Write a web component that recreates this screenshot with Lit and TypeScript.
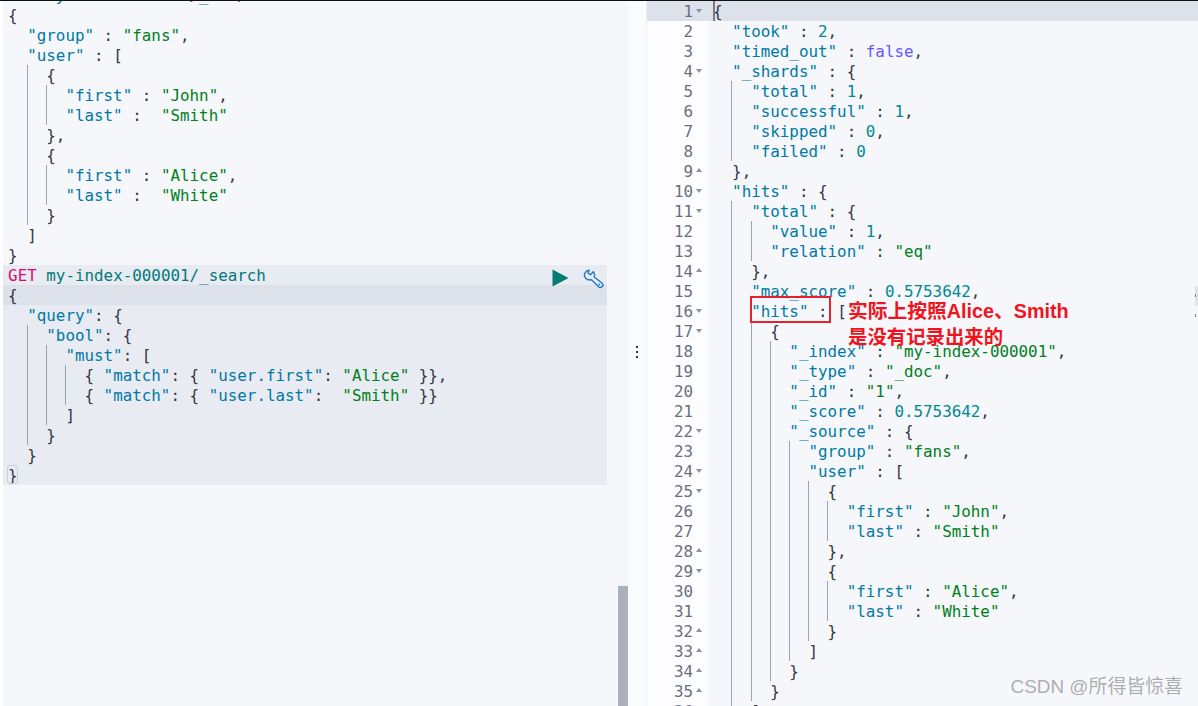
import { LitElement, html, css, nothing } from "lit";
import { customElement } from "lit/decorators.js";

const leftLines = [
  `PUT my-index-000001/_doc/1`,
  `{`,
  `  "group" : "fans",`,
  `  "user" : [`,
  `    {`,
  `      "first" : "John",`,
  `      "last" :  "Smith"`,
  `    },`,
  `    {`,
  `      "first" : "Alice",`,
  `      "last" :  "White"`,
  `    }`,
  `  ]`,
  `}`,
  `GET my-index-000001/_search`,
  `{`,
  `  "query": {`,
  `    "bool": {`,
  `      "must": [`,
  `        { "match": { "user.first": "Alice" }},`,
  `        { "match": { "user.last":  "Smith" }}`,
  `      ]`,
  `    }`,
  `  }`,
  `}`,
];

const rightLines = [
  `{`,
  `  "took" : 2,`,
  `  "timed_out" : false,`,
  `  "_shards" : {`,
  `    "total" : 1,`,
  `    "successful" : 1,`,
  `    "skipped" : 0,`,
  `    "failed" : 0`,
  `  },`,
  `  "hits" : {`,
  `    "total" : {`,
  `      "value" : 1,`,
  `      "relation" : "eq"`,
  `    },`,
  `    "max_score" : 0.5753642,`,
  `    "hits" : [`,
  `      {`,
  `        "_index" : "my-index-000001",`,
  `        "_type" : "_doc",`,
  `        "_id" : "1",`,
  `        "_score" : 0.5753642,`,
  `        "_source" : {`,
  `          "group" : "fans",`,
  `          "user" : [`,
  `            {`,
  `              "first" : "John",`,
  `              "last" : "Smith"`,
  `            },`,
  `            {`,
  `              "first" : "Alice",`,
  `              "last" : "White"`,
  `            }`,
  `          ]`,
  `        }`,
  `      }`,
  `    ]`,
];

const foldOpen = new Set([1, 4, 10, 11, 16, 17, 22, 24, 25, 29]);
const foldClose = new Set([9, 14, 28, 32, 33, 34, 35]);

function tokens(text: string) {
  const re = /("(?:[^"]*)")(\s*:)?|\b(false|true)\b|(-?\d+(?:\.\d+)?)|([^"\d]+?(?=["\d]|false|$))/g;
  const out: unknown[] = [];
  let m: RegExpExecArray | null;
  while ((m = re.exec(text))) {
    if (m[1] !== undefined) {
      if (m[2] !== undefined) {
        out.push(html`<span class="key">${m[1]}</span><span class="pun">${m[2]}</span>`);
      } else {
        out.push(html`<span class="str">${m[1]}</span>`);
      }
    } else if (m[3]) out.push(html`<span class="bool">${m[3]}</span>`);
    else if (m[4]) out.push(html`<span class="num">${m[4]}</span>`);
    else out.push(html`<span class="pun">${m[0]}</span>`);
  }
  return out;
}

function code(line: string) {
  const req = /^(GET|PUT) (.*)$/.exec(line);
  if (req) {
    return html`<span class="t"><span class="verb">${req[1]}</span> <span class="url">${req[2]}</span></span>`;
  }
  const indent = line.length - line.trimStart().length;
  const guides = [];
  for (let c = 0; c < indent; c += 2) {
    guides.push(html`<span class="ind ${c > 0 ? "guide" : ""}"></span>`);
  }
  return html`${guides}<span class="t">${tokens(line.trimStart())}</span>`;
}

@customElement("app-root")
export class AppRoot extends LitElement {
  static styles = css`
    :host {
      display: block;
      width: 1198px;
      height: 706px;
      overflow: hidden;
      background: #fff;
      position: relative;
      font-family: "DejaVu Sans Mono", "Liberation Mono", monospace;
      font-size: 15.87px;
      line-height: 22px;
      color: #343741;
    }
    .top {
      height: 1px;
      background: #111;
    }
    .main {
      display: flex;
      height: 705px;
    }
    .left {
      width: 625px;
      margin-left: 3px;
      display: flex;
      background: #f5f7fa;
      overflow: hidden;
      flex: none;
    }
    .leftcode {
      width: 604px;
      flex: none;
      margin-top: -16px;
    }
    .gap {
      width: 11px;
      flex: none;
    }
    .track {
      width: 10px;
      flex: none;
      display: flex;
      flex-direction: column;
      justify-content: flex-end;
    }
    .thumb {
      height: 120px;
      background: #abb1b8;
    }
    .resizer {
      width: 18px;
      flex: none;
      background: #fafbfd;
      display: flex;
      flex-direction: column;
      align-items: center;
      justify-content: center;
    }
    .resizer i {
      width: 2px;
      height: 2px;
      background: #343741;
      display: block;
    }
    .dots {
      display: flex;
      flex-direction: column;
      gap: 3px;
      margin-bottom: 4px;
    }
    .right {
      flex: 1;
      min-width: 0;
      background: #f5f7fa;
      border-left: 1px solid #eceff5;
      overflow: hidden;
      position: relative;
    }
    .ln {
      height: 20px;
      padding-left: 4.4px;
      white-space: pre;
      display: flex;
      align-items: flex-start;
    }
    .leftcode .ln {
      padding-left: 4.5px;
    }
    .ln.req {
      background: #e8ebf2;
    }
    .ln.active {
      background: #dce1ea;
    }
    .txt {
      display: block;
    }
    .t {
      margin-left: 0.6px;
    }
    .row {
      display: flex;
      height: 20px;
    }
    .row .ln {
      flex: 1;
      position: relative;
    }
    .gut {
      width: 61px;
      flex: none;
      background: #fdfdff;
      color: #69707d;
      display: flex;
      align-items: flex-start;
      justify-content: flex-end;
      padding-right: 15px;
      box-sizing: border-box;
      position: relative;
    }
    .row.active .gut {
      background: #dce1ea;
    }
    .fold {
      position: absolute;
      left: 49px;
      width: 0;
      height: 0;
      border-left: 3.5px solid transparent;
      border-right: 3.5px solid transparent;
    }
    .fold.open {
      top: 8px;
      border-top: 4px solid #8d929b;
    }
    .fold.close {
      top: 7px;
      border-bottom: 4px solid #8d929b;
    }
    .cursor {
      position: absolute;
      left: 5px;
      top: 0;
      width: 2px;
      height: 20px;
      background: #777d87;
    }
    .ind {
      display: inline-block;
      width: 19.108px;
      height: 20px;
      vertical-align: top;
      flex: none;
    }
    .guide {
      box-shadow: inset 1px 0 0 #9ca3b4;
    }
    .key { color: #0079a5; }
    .str { color: #007f1c; }
    .num { color: #00898f; }
    .bool { color: #6655ff; }
    .pun { color: #343741; }
    .verb { color: #dd0a73; }
    .url { color: #00797a; }
    .actions {
      margin-left: auto;
      display: flex;
      align-items: flex-start;
      gap: 14px;
      padding-right: 3px;
      margin-top: 4px;
    }
    .actions svg {
      display: block;
    }
    .match {
      position: absolute;
      left: 3.5px;
      top: 0;
      width: 11px;
      height: 19px;
      border: 1px solid #c9ced8;
      border-radius: 3px;
      box-sizing: border-box;
    }
    .leftrel {
      position: relative;
    }
    .redbox {
      position: absolute;
      left: 103px;
      top: 295px;
      width: 81px;
      height: 27px;
      border: 2px solid #e8202a;
      box-sizing: border-box;
    }
    .note {
      position: absolute;
      left: 201px;
      font-family: "Liberation Sans", "Noto Sans CJK SC", sans-serif;
      font-weight: 700;
      font-size: 19.4px;
      line-height: 26px;
      color: #f0141e;
      white-space: pre;
    }
    .note.a { top: 297px; font-size: 19.75px; }
    .note.b { top: 323px; }
    .wm {
      position: absolute;
      right: 15px;
      bottom: 6px;
      font-family: "Liberation Sans", "Noto Sans CJK SC", sans-serif;
      font-size: 18.9px;
      line-height: 26px;
      color: rgba(110, 110, 110, 0.55);
      white-space: pre;
    }
    .edge {
      position: absolute;
      right: 0;
      top: 285px;
      width: 3px;
      height: 20px;
      background: #dfe4ec;
    }
    .tick {
      position: absolute;
      left: 548px;
      width: 1px;
      height: 3px;
      background: #777d87;
    }
    .tick.a { top: 293px; }
    .tick.b { top: 313px; }
  `;

  render() {
    return html`
      <div class="top"></div>
      <div class="main">
        <div class="left">
          <div class="leftcode">
            ${leftLines.map((l, i) => {
              const inReq = i >= 14;
              const isGet = i === 14;
              const isActive = i === 15;
              return html`<div class="ln ${inReq ? "req" : ""} ${isActive ? "active" : ""} ${i === 24 ? "leftrel" : ""}">
                <span class="txt">${code(l)}</span>
                ${i === 24 ? html`<span class="match"></span>` : nothing}
                ${isGet
                  ? html`<div class="actions">
                      <svg width="17" height="18" viewBox="0 0 17 18"><path d="M0.5 0.5 L16.5 9 L0.5 17.5 Z" fill="#017d73"></path></svg>
                      <svg width="21" height="21" viewBox="0 0 21 21" fill="none" stroke="#1f78c1" stroke-width="1.4" stroke-linejoin="round" stroke-linecap="round">
                        <path d="M6.2 1.2 A5.1 5.1 0 0 0 1.6 7.6 A5.1 5.1 0 0 0 8.2 10.6 L15.4 17.6 A2.5 2.5 0 0 0 19.2 14.2 L11.2 8 A5.1 5.1 0 0 0 10.2 2.8 L7.4 5.8 L5 4 Z"></path>
                        <circle cx="16.4" cy="15.4" r="0.9" fill="#1f78c1" stroke="none"></circle>
                      </svg>
                    </div>`
                  : nothing}
              </div>`;
            })}
          </div>
          <div class="gap"></div>
          <div class="track"><div class="thumb"></div></div>
        </div>
        <div class="resizer">
          <div class="dots"><i></i><i></i><i></i></div>
        </div>
        <div class="right">
          ${rightLines.map((l, i) => {
            const n = i + 1;
            return html`<div class="row ${n === 1 ? "active" : ""}">
              <div class="gut">
                ${n}
                ${foldOpen.has(n) ? html`<span class="fold open"></span>` : nothing}
                ${foldClose.has(n) ? html`<span class="fold close"></span>` : nothing}
              </div>
              <div class="ln ${n === 1 ? "active" : ""}">
                <span class="txt">${code(l)}</span>
                ${n === 1 ? html`<span class="cursor"></span>` : nothing}
              </div>
            </div>`;
          })}
          <div class="redbox"></div>
          <div class="note a">实际上按照Alice、Smith</div>
          <div class="note b">是没有记录出来的</div>
          <div class="edge"></div>
          <div class="tick a"></div>
          <div class="tick b"></div>
        </div>
      </div>
      <div class="wm">CSDN @所得皆惊喜</div>
    `;
  }
}
